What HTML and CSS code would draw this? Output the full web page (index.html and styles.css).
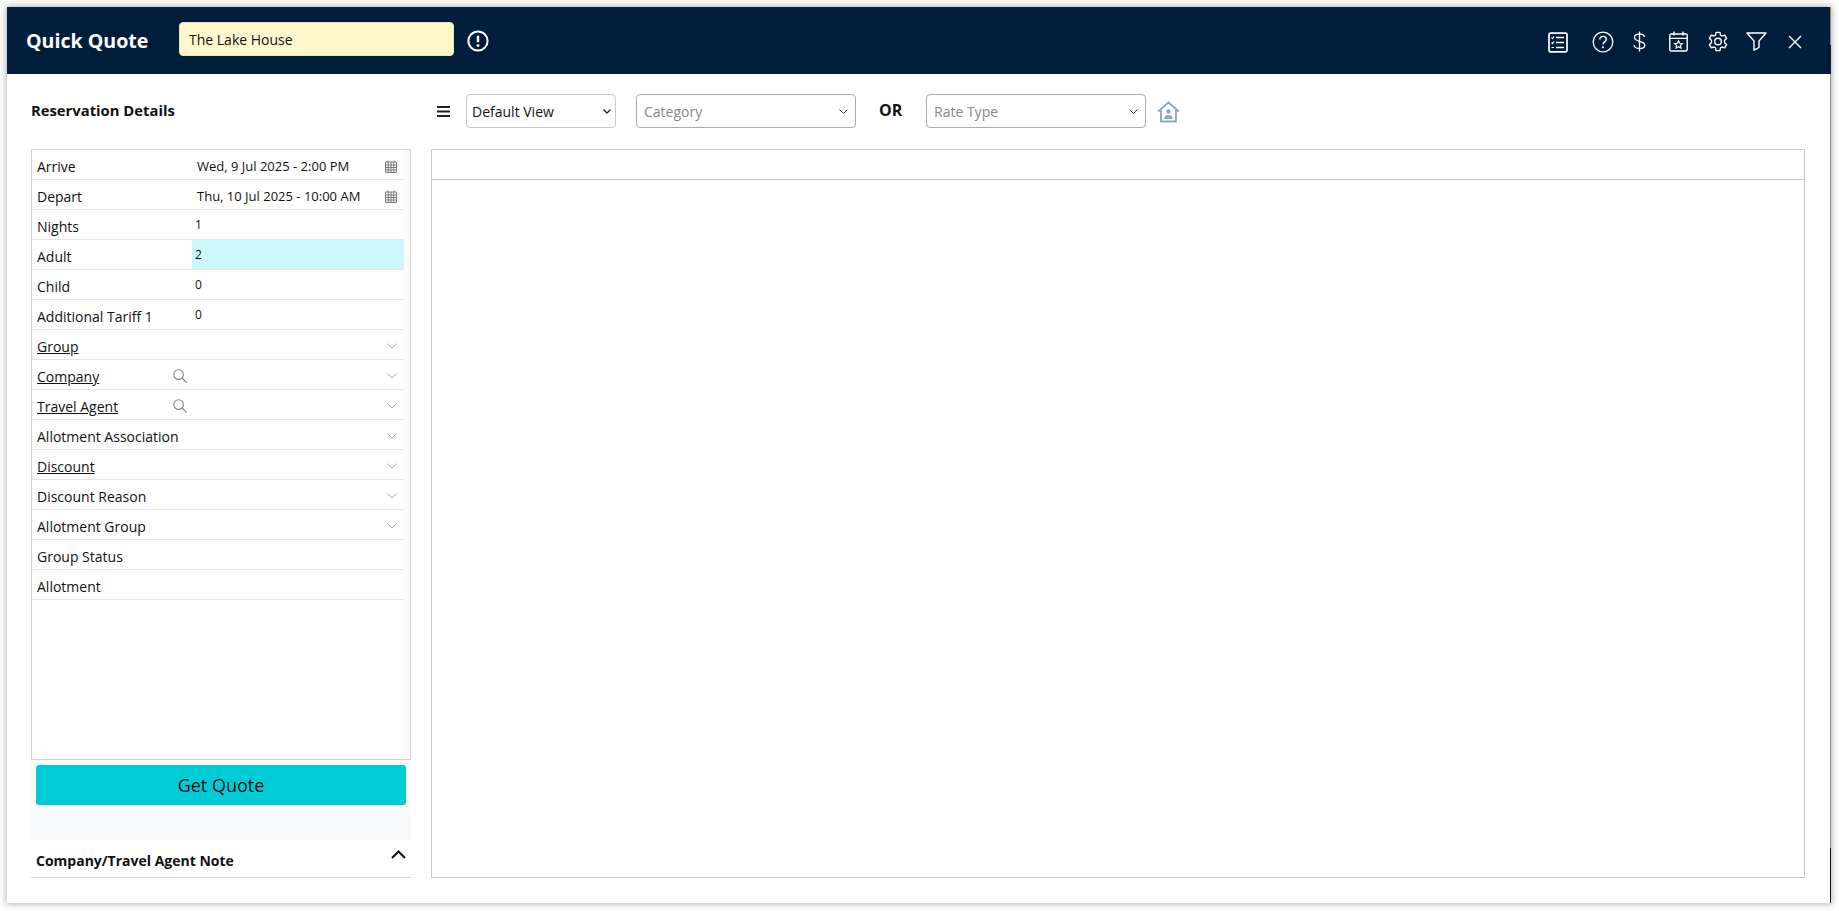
FILE: index.html
```html
<!DOCTYPE html>
<html lang="en">
<head>
<meta charset="utf-8">
<title>Quick Quote</title>
<link rel="stylesheet" href="styles.css">
</head>
<body>
<svg class="defs" width="0" height="0" aria-hidden="true">
  <defs>
    <symbol id="cal" viewBox="0 0 12 13">
      <path d="M.5 2h11v10.500H.5zM.5 5h11M.5 7.500h11M.5 10h11M3.300 2v10.500M6 2v10.500M8.700 2v10.500M3 .5V2M9 .5V2" fill="none" stroke="#7a7a7a" stroke-width="1"/>
    </symbol>
    <symbol id="chev" viewBox="0 0 10 6">
      <path d="M.5.7 5 5 9.500.7" fill="none" stroke="#a5a5a5" stroke-width="1"/>
    </symbol>
    <symbol id="mag" viewBox="0 0 14 14">
      <circle cx="5.600" cy="5.600" r="4.800" fill="none" stroke="#888" stroke-width="1.100"/>
      <path d="m9 9 4.600 4.600" fill="none" stroke="#888" stroke-width="1.200"/>
    </symbol>
  </defs>
</svg>
<div class="modal">
  <header class="topbar">
    <h1 class="title">Quick Quote</h1>
    <div class="prop-name">The Lake House</div>
    <svg class="alert" width="22" height="22" viewBox="0 0 22 22">
      <circle cx="11" cy="11" r="9.600" fill="none" stroke="#fff" stroke-width="2"/>
      <path d="M11 5.600v6.600" stroke="#fff" stroke-width="2.400" fill="none"/>
      <circle cx="11" cy="15.600" r="1.400" fill="#fff"/>
    </svg>
    <div class="actions">
      <svg class="ic-list" width="20" height="21" viewBox="0 0 20 21" fill="none" stroke="#fff">
        <rect x="1" y="1.200" width="18" height="18.600" rx="1.600" stroke-width="1.700"/>
        <path d="M8 5.500h8M8 10.500h8M8 15.500h8" stroke-width="1.500"/>
        <path d="M3.500 5.500l1 1 1.600-2M3.500 10.500l1 1 1.600-2M3.500 15.500h2.600" stroke-width="1.200"/>
      </svg>
      <svg class="ic-help" width="22" height="22" viewBox="0 0 22 22" fill="none" stroke="#fff">
        <circle cx="11" cy="11" r="9.800" stroke-width="1.300"/>
        <path d="M7.800 8.600c0-2 1.500-3.200 3.300-3.200s3.200 1.200 3.200 2.900c0 2.500-3.300 2.600-3.300 5.100" stroke-width="1.400"/>
        <circle cx="11" cy="16.300" r="1" fill="#fff" stroke="none"/>
      </svg>
      <svg class="ic-dollar" width="13" height="21" viewBox="0 0 13 21" fill="none" stroke="#fff" stroke-width="1.300">
        <path d="M11.500 6c-.3-2-2.300-3-5-3s-5 1.200-5 3.500c0 5 10.300 2.500 10.300 7.700 0 2.100-2.300 3.300-5.300 3.300s-5.200-1.200-5.500-3.500M6.500.5v20"/>
      </svg>
      <svg class="ic-cal" width="19" height="21" viewBox="0 0 19 21" fill="none" stroke="#fff">
        <rect x=".8" y="3" width="17.400" height="17" rx="1.500" stroke-width="1.400"/>
        <path d="M1 7.400h17M5 .5v4M14 .5v4" stroke-width="1.400"/>
        <path d="m9.500 9.800 1.200 2.500 2.700.3-2 1.800.6 2.700-2.500-1.400-2.500 1.400.6-2.700-2-1.800 2.700-.3z" stroke-width="1.200"/>
      </svg>
      <svg class="ic-gear" width="22" height="23" viewBox="0 0 24 24" fill="none" stroke="#fff" stroke-width="1.500">
        <circle cx="12" cy="12" r="3.600"/>
        <path d="M9.900 2h4.200l.6 3 1.700 1 2.900-1 2.100 3.600-2.300 2v2.800l2.300 2-2.100 3.600-2.900-1-1.700 1-.6 3H9.900l-.6-3-1.700-1-2.900 1-2.100-3.600 2.300-2v-2.800l-2.300-2L4.700 5l2.900 1 1.700-1z" stroke-linejoin="round"/>
      </svg>
      <svg class="ic-filter" width="21" height="19" viewBox="0 0 21 19" fill="none" stroke="#fff" stroke-width="1.400">
        <path d="M1 1h19l-7 8v6.500l-5 2.700V9z" stroke-linejoin="round"/>
      </svg>
      <svg class="ic-close" width="14" height="14" viewBox="0 0 14 14" fill="none" stroke="#fff" stroke-width="1.400">
        <path d="m1 1 12 12M13 1 1 13"/>
      </svg>
    </div>
  </header>

  <div class="content">
    <div class="toolbar">
      <h2 class="section-title">Reservation Details</h2>
      <svg class="burger" width="13" height="11" viewBox="0 0 13 11"><path d="M0 1h13M0 5.500h13M0 10h13" stroke="#222" stroke-width="2" fill="none"/></svg>
      <span class="sel-box sel-view">
        <select class="sel"><option>Default View</option></select>
        <svg class="sel-arrow" width="8" height="5" viewBox="0 0 8 5"><path d="M.5.500 4 4 7.500.5" fill="none" stroke="#222" stroke-width="1.300"/></svg>
      </span>
      <span class="sel-box sel-cat">
        <select class="sel placeholder"><option>Category</option></select>
        <svg class="sel-arrow" width="9" height="5" viewBox="0 0 9 5"><path d="M.5.500 4.500 4.500l4-4" fill="none" stroke="#444" stroke-width="1"/></svg>
      </span>
      <span class="or">OR</span>
      <span class="sel-box sel-cat sel-rate">
        <select class="sel placeholder"><option>Rate Type</option></select>
        <svg class="sel-arrow" width="9" height="5" viewBox="0 0 9 5"><path d="M.5.500 4.500 4.500l4-4" fill="none" stroke="#444" stroke-width="1"/></svg>
      </span>
      <svg class="house" width="23" height="22" viewBox="0 0 23 22" fill="none" stroke="#8aa8b5" stroke-width="1.800">
        <path d="M1.200 10.500 11.500 1.500l10.300 9M4 9v11.500h15V9"/>
        <circle cx="11.500" cy="10.500" r="2.200" fill="#8aa8b5" stroke="none"/>
        <path d="M7.500 18v-1.800c0-1.300 1.800-2.200 4-2.200s4 .9 4 2.200V18z" fill="#8aa8b5" stroke="none"/>
      </svg>
    </div>

    <div class="columns">
      <aside class="left">
        <div class="panel">
          <div class="rows">
            <div class="row"><span class="label">Arrive</span><span class="val date">Wed, 9 Jul 2025 - 2:00 PM</span><svg class="cal"><use href="#cal"/></svg></div>
            <div class="row"><span class="label">Depart</span><span class="val date">Thu, 10 Jul 2025 - 10:00 AM</span><svg class="cal"><use href="#cal"/></svg></div>
            <div class="row"><span class="label">Nights</span><span class="val num">1</span></div>
            <div class="row"><span class="label">Adult</span><span class="val num active">2</span></div>
            <div class="row"><span class="label">Child</span><span class="val num">0</span></div>
            <div class="row"><span class="label">Additional Tariff 1</span><span class="val num">0</span></div>
            <div class="row"><span class="label link">Group</span><svg class="chev"><use href="#chev"/></svg></div>
            <div class="row"><span class="label link">Company</span><svg class="mag"><use href="#mag"/></svg><svg class="chev"><use href="#chev"/></svg></div>
            <div class="row"><span class="label link">Travel Agent</span><svg class="mag"><use href="#mag"/></svg><svg class="chev"><use href="#chev"/></svg></div>
            <div class="row"><span class="label">Allotment Association</span><svg class="chev"><use href="#chev"/></svg></div>
            <div class="row"><span class="label link">Discount</span><svg class="chev"><use href="#chev"/></svg></div>
            <div class="row"><span class="label">Discount Reason</span><svg class="chev"><use href="#chev"/></svg></div>
            <div class="row"><span class="label">Allotment Group</span><svg class="chev"><use href="#chev"/></svg></div>
            <div class="row"><span class="label">Group Status</span></div>
            <div class="row"><span class="label">Allotment</span></div>
          </div>
          <div class="strip"></div>
        </div>
        <div class="quote-wrap"><button class="quote-btn" type="button">Get Quote</button></div>
        <div class="note">
          <span class="note-title">Company/Travel Agent Note</span>
          <svg class="note-chev" width="15" height="9" viewBox="0 0 15 9"><path d="M1 8 7.500 1.500 14 8" fill="none" stroke="#111" stroke-width="2"/></svg>
        </div>
      </aside>
      <section class="results">
        <div class="results-head"></div>
      </section>
    </div>
  </div>
  <div class="edge"></div>
</div>
</body>
</html>
```

FILE: styles.css
```css
* { box-sizing: border-box; }
html, body { height: 100%; }
body {
  margin: 0;
  background: #fff;
  overflow: hidden;
  font-family: "Open Sans", "Liberation Sans", sans-serif;
  font-size: 14px;
  color: #111;
}
.defs { display: block; height: 0; }
.modal {
  position: relative;
  margin: 7px 0 0 7px;
  width: 1824px;
  height: 896px;
  background: #fff;
  display: flex;
  flex-direction: column;
  box-shadow: 0 0 7px 1px rgba(0, 0, 0, .3);
}
.edge {
  position: absolute;
  top: 0;
  right: 0;
  bottom: 0;
  width: 1px;
  background: linear-gradient(#8a8a8a 0 38px, #001e3c 38px 67px, #8f8f8f 67px 841px, #12122a 841px);
}
.topbar {
  height: 67px;
  flex: none;
  background: #001e3c;
  display: flex;
  align-items: center;
  padding-left: 19px;
}
.title {
  margin: 0;
  width: 153px;
  font-size: 19.6px;
  font-weight: 700;
  color: #fff;
}
.prop-name {
  width: 275px;
  height: 34px;
  margin-top: -3px;
  padding-left: 9px;
  display: flex;
  align-items: center;
  background: #fff8cd;
  border-radius: 4px;
  border: 1px solid #e8e2c0;
  color: #111;
}
.alert { margin-left: 13px; }
.actions {
  margin-left: auto;
  display: flex;
  align-items: center;
  padding: 2px 29px 0 0;
}
.ic-list { margin: 2px 24px 0 0; }
.ic-help { margin-right: 19px; }
.ic-dollar { margin-right: 23px; }
.ic-cal { margin-right: 19px; }
.ic-gear { margin-right: 17px; }
.ic-filter { margin-right: 21px; }

.content {
  flex: 1;
  display: flex;
  flex-direction: column;
  padding: 20px 26px 25px 24px;
  min-height: 0;
}
.toolbar {
  height: 34px;
  flex: none;
  display: flex;
  align-items: center;
}
.section-title {
  margin: -2px 0 0 0;
  width: 406px;
  font-size: 14.8px;
  font-weight: 700;
}
.burger { margin-right: 16px; }
.sel-box {
  position: relative;
  display: block;
  height: 34px;
}
.sel {
  display: block;
  width: 100%;
  height: 34px;
  appearance: none;
  border: 1px solid #c9c9c9;
  border-radius: 4px;
  background-color: #fff;
  font-family: inherit;
  font-size: 14px;
  color: #111;
  padding: 0 5px;
}
.sel-arrow { position: absolute; right: 5px; top: 15px; }
.sel-view { width: 150px; }
.sel-cat { width: 220px; margin-left: 20px; }
.sel-cat .sel { border-color: #aaa; padding: 0 7px; }
.sel-cat .sel-arrow { right: 8px; }
.sel-rate { margin-left: 0; }
.placeholder { color: #888; }
.or {
  width: 70px;
  padding-left: 23px;
  margin-top: -3px;
  font-size: 16px;
  font-weight: 700;
}
.house { margin: 2px 0 0 11px; }

.columns {
  flex: 1;
  margin-top: 21px;
  display: flex;
  gap: 20px;
  min-height: 0;
}
.left {
  width: 380px;
  flex: none;
  display: flex;
  flex-direction: column;
}
.panel {
  height: 611px;
  flex: none;
  display: flex;
  border: 1px solid #d2d2d2;
}
.rows { width: 372px; flex: none; }
.strip { flex: 1; background: #f9fafc; }
.row {
  position: relative;
  height: 30px;
  display: flex;
  align-items: center;
  border-bottom: 1px solid #e6e6e6;
}
.label {
  width: 160px;
  flex: none;
  padding: 4px 0 0 5px;
  font-size: 14px;
  white-space: nowrap;
}
.link { text-decoration: underline; }
.val { height: 100%; flex: 1; display: flex; align-items: center; }
.date { padding: 3px 0 0 5px; font-size: 13px; }
.num { padding: 0 0 1px 3px; font-size: 12px; }
.active { background: #ccf6fb; }
.cal { width: 12px; height: 13px; position: absolute; right: 7px; top: 10px; }
.chev { width: 10px; height: 6px; position: absolute; right: 7px; top: 13px; }
.mag { width: 14px; height: 14px; position: absolute; left: 141px; top: 9px; }

.quote-wrap {
  height: 80px;
  flex: none;
  padding: 5px 5px 0 5px;
  background: #f9fafc;
}
.quote-btn {
  width: 100%;
  height: 40px;
  padding: 0;
  border: 0;
  border-radius: 3px;
  background: #00ccd8;
  color: #111;
  font-family: inherit;
  font-size: 18px;
}
.note {
  height: 38px;
  flex: none;
  display: flex;
  justify-content: space-between;
  padding: 11px 5px 0 5px;
  border-bottom: 1px solid #d2d2d2;
}
.note-title { font-size: 14px; font-weight: 700; }
.note-chev { margin-top: -1px; }

.results {
  flex: 1;
  border: 1px solid #cacaca;
}
.results-head {
  height: 30px;
  border-bottom: 1px solid #cacaca;
}
```
